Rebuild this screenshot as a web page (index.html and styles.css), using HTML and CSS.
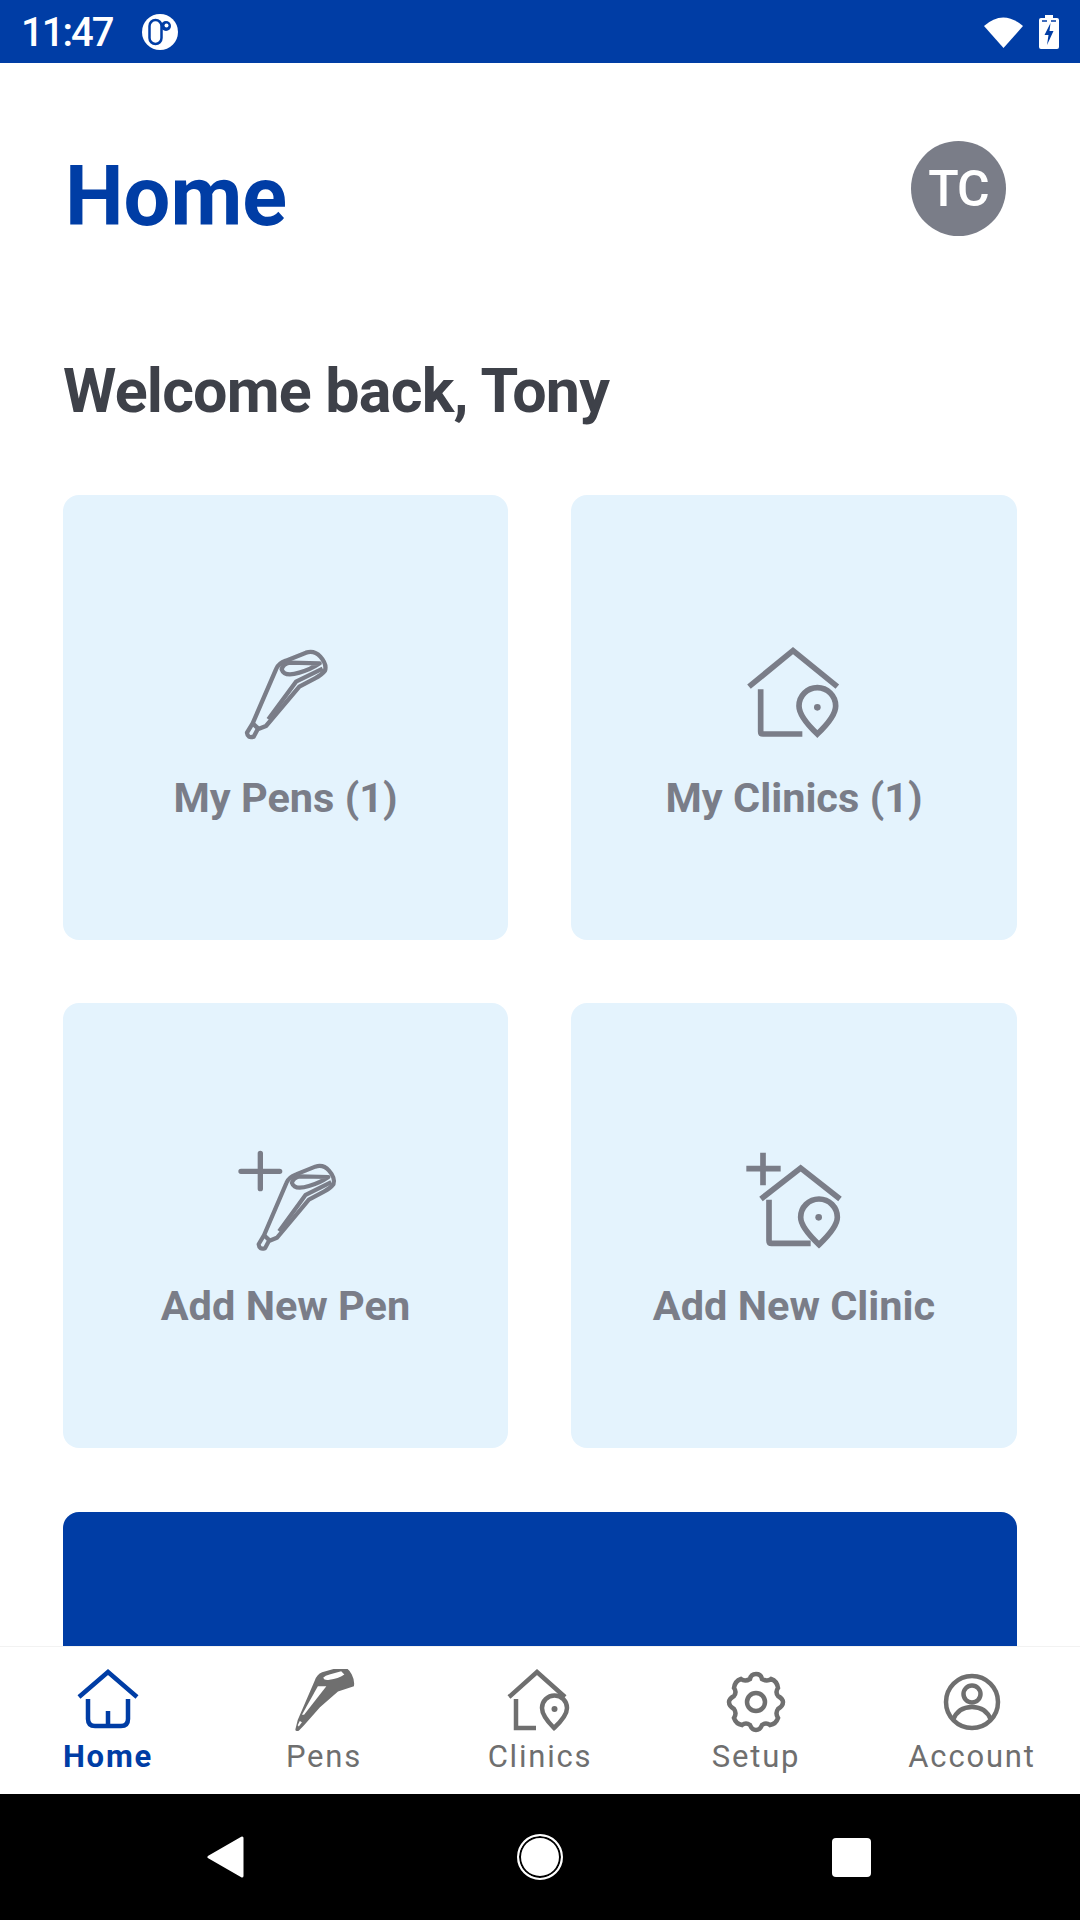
FILE: index.html
```html
<!DOCTYPE html>
<html lang="en">

<head>
  <meta charset="UTF-8">
  <meta name="viewport" content="width=device-width, initial-scale=1.0">
  <title>Home</title>

  <link rel="stylesheet" href="styles.css">
</head>

<body>
  <svg class="defs" width="0" height="0">
    <defs>
      <g id="pen">
        <path d="M78 308 L95 280 L165 118 Q172 100 195 92 L255 68 Q280 60 298 80 Q318 102 312 122 Q302 135 282 145 L235 170 L135 288 L110 298 L98 320 Q80 326 78 308 Z" />
        <path d="M182 118 Q186 102 205 98 L296 100 Q270 118 235 128 Q190 142 182 118 Z" />
        <path d="M305 116 L225 155 L142 268" />
        <path d="M95 280 L112 296" />
      </g>
    </defs>
  </svg>

  <div class="app">
    <div class="status-bar">
      <span class="time">11:47</span>
      <svg class="status-logo" viewBox="0 0 36 36">
        <circle cx="18" cy="18" r="18" fill="#fff" />
        <rect x="7.500" y="6" width="12" height="24" rx="6" fill="none" stroke="#003da5" stroke-width="2.500" />
        <circle cx="24" cy="12" r="5" fill="#003da5" />
        <circle cx="24.500" cy="11.500" r="2" fill="#fff" />
      </svg>
      <span class="spacer"></span>
      <svg class="status-wifi" viewBox="0 0 40 32">
        <path d="M0 10 Q19 -7 39 10 L19.500 32 Z" fill="#fff" />
      </svg>
      <svg class="status-battery" viewBox="0 0 20 34">
        <path d="M6 0 H14 V3 H18 Q20 3 20 5 V32 Q20 34 18 34 H2 Q0 34 0 32 V5 Q0 3 2 3 H6 Z" fill="#fff" />
        <path d="M3 6 H8 M12 6 H17" stroke="#003da5" stroke-width="1.500" />
        <path d="M11.500 8 L5.500 20 H9.500 L8 30 L14.500 16 H10.500 Z" fill="#003da5" />
      </svg>
    </div>

    <main class="content">
      <header class="page-head">
        <h1>Home</h1>
        <div class="avatar">TC</div>
      </header>
      <h2>Welcome back, Tony</h2>

      <div class="cards">
        <div class="card">
          <svg class="card-icon" viewBox="0 0 390 360">
            <use href="#pen" class="line-pen" />
          </svg>
          <div class="card-label">My Pens (1)</div>
        </div>
        <div class="card">
          <svg class="card-icon" viewBox="0 0 390 360">
            <g class="line-clinic">
              <path d="M60 170 L192 62 L325 170" />
              <path d="M95 178 V305 Q95 312 102 312 H220" />
              <path d="M265 312 Q210 260 210 228 A55 55 0 0 1 320 228 Q320 260 265 312 Z" />
            </g>
            <circle class="icon-dot" cx="265" cy="232" r="10" />
          </svg>
          <div class="card-label">My Clinics (1)</div>
        </div>
        <div class="card">
          <svg class="card-icon" viewBox="0 0 390 360">
            <path class="plus-round" d="M60 100 H176 M118 46 V152" />
            <use href="#pen" class="line-pen" transform="translate(38 20) scale(0.96 0.97)" />
          </svg>
          <div class="card-label">Add New Pen</div>
        </div>
        <div class="card">
          <svg class="card-icon" viewBox="0 0 390 360">
            <path class="plus-square" d="M52 92 H155 M102 44 V142" />
            <g class="line-clinic">
              <path d="M96 183 L215 90 L333 183" />
              <path d="M120 185 V308 Q120 316 128 316 H245" />
              <path d="M270 320 Q215 268 215 238 A55 55 0 0 1 325 238 Q325 268 270 320 Z" />
            </g>
            <circle class="icon-dot" cx="269" cy="238" r="10" />
          </svg>
          <div class="card-label">Add New Clinic</div>
        </div>
      </div>

      <div class="banner"></div>
    </main>

    <nav class="tabs">
      <div class="tab active">
        <svg class="tab-icon" viewBox="0 0 72 64">
          <path class="tab-line" d="M7 28 L36 3 L65 28" />
          <path class="tab-line" d="M16 30 V50 Q16 57 23 57 H49 Q56 57 56 50 V30 M36 42 V57" />
        </svg>
        <span>Home</span>
      </div>
      <div class="tab">
        <svg class="tab-icon" viewBox="0 0 72 64">
          <g transform="translate(-3 -3) scale(1.06)">
            <path class="pen-body" d="M10 59 L12 51 L28 14 Q30 8 35 6 L52 1 Q59 0 63 8 Q66 14 65 19 L50 24 L33 39 L18 56 L13 61 Q9 62 10 59 Z" />
            <path class="pen-white" d="M36 11 Q38 9 42 8 L53 5 L56 8 Q50 12 42 13 Q37 14 36 11 Z" />
            <path class="pen-white" d="M31 19 L39 19 L18 46 L16 46 Z" />
            <path class="pen-white" d="M14 52 L16 53 L13 57 L12 56 Z" />
          </g>
        </svg>
        <span>Pens</span>
      </div>
      <div class="tab">
        <svg class="tab-icon" viewBox="0 0 72 64">
          <path class="tab-line" d="M5 28 L33 3 L61 28" />
          <path class="tab-line" d="M12 30 V59 H32" />
          <path class="tab-line" d="M50 59 Q38 47 38 39 A12.500 12.500 0 0 1 63 39 Q63 47 50 59 Z" />
          <circle class="tab-dot" cx="50.500" cy="40" r="3" />
        </svg>
        <span>Clinics</span>
      </div>
      <div class="tab">
        <svg class="tab-icon" viewBox="0 0 72 64">
          <path class="tab-line" d="M36 5 Q41 5 42 10 Q47 13 51 10 Q57 12 58 19 Q55 23 58 27 Q63 30 63 33 Q63 37 58 40 Q55 44 58 49 Q56 55 50 56 Q46 53 42 56 Q40 61 36 61 Q32 61 30 56 Q26 53 22 56 Q16 55 14 49 Q17 44 14 40 Q9 37 9 33 Q9 30 14 27 Q17 23 14 19 Q15 12 21 10 Q25 13 30 10 Q31 5 36 5 Z" />
          <circle class="tab-line" cx="36" cy="33" r="9" />
        </svg>
        <span>Setup</span>
      </div>
      <div class="tab">
        <svg class="tab-icon" viewBox="0 0 72 64">
          <circle class="tab-line" cx="36" cy="33" r="26" />
          <circle class="tab-line" cx="36" cy="25" r="8.500" />
          <path class="tab-line" d="M17 51 Q22 38 36 38 Q50 38 55 51" />
        </svg>
        <span>Account</span>
      </div>
    </nav>

    <div class="system-bar">
      <svg class="sys-back" viewBox="0 0 38 42">
        <path d="M36 2 V40 L3 21 Z" fill="#fff" stroke="#fff" stroke-width="3" stroke-linejoin="round" />
      </svg>
      <div class="sys-home"></div>
      <div class="sys-recent"></div>
    </div>
  </div>
</body>

</html>
```

FILE: styles.css
```css
body {
  margin: 0;
  font-family: Roboto, "Liberation Sans", sans-serif;
  background-color: #fff;
}

.defs {
  position: absolute;
}

.app {
  display: flex;
  flex-direction: column;
  width: 1080px;
  height: 1920px;
  overflow: hidden;
}

.status-bar {
  display: flex;
  align-items: center;
  flex: none;
  height: 63px;
  padding: 0 21px 0 21px;
  background-color: #003da5;
  color: #fff;
}

.time {
  padding-top: 2px;
  font-size: 40px;
  font-weight: 500;
  letter-spacing: -2px;
}

.status-logo {
  width: 36px;
  height: 36px;
  margin-left: 30px;
}

.spacer {
  flex: 1;
}

.status-wifi {
  width: 40px;
  height: 32px;
  margin-right: 15px;
}

.status-battery {
  width: 20px;
  height: 34px;
}

.content {
  flex: 1;
  min-height: 0;
  overflow: hidden;
  padding: 0 63px;
}

.page-head {
  display: flex;
  justify-content: space-between;
  align-items: flex-start;
  padding: 78px 11px 0 2px;
}

h1 {
  margin: 6px 0 0;
  font-size: 83px;
  line-height: 100px;
  font-weight: 700;
  color: #003da5;
}

.avatar {
  display: flex;
  justify-content: center;
  align-items: center;
  width: 95px;
  height: 95px;
  border-radius: 50%;
  background-color: #7a7d88;
  color: #fff;
  font-size: 50px;
  font-weight: 500;
  letter-spacing: -1px;
}

h2 {
  margin: 109px 0 0;
  font-size: 61px;
  line-height: 70px;
  font-weight: 700;
  letter-spacing: -0.8px;
  color: #3e4149;
}

.cards {
  display: grid;
  grid-template-columns: 445px 446px;
  gap: 63px;
  margin-top: 69px;
}

.card {
  display: flex;
  flex-direction: column;
  align-items: center;
  height: 445px;
  padding-top: 135px;
  box-sizing: border-box;
  border-radius: 16px;
  background-color: #e4f3fd;
}

.card-icon {
  width: 130px;
  height: 120px;
}

.card-label {
  margin-top: 23px;
  font-size: 41.500px;
  line-height: 50px;
  font-weight: 700;
  color: #7a7d88;
}

.line-pen {
  fill: none;
  stroke: #7a7d88;
  stroke-width: 13;
  stroke-linejoin: round;
}

.line-clinic {
  fill: none;
  stroke: #7a7d88;
  stroke-width: 17;
}

.icon-dot {
  fill: #7a7d88;
}

.plus-round {
  fill: none;
  stroke: #7a7d88;
  stroke-width: 16;
  stroke-linecap: round;
}

.plus-square {
  fill: none;
  stroke: #7a7d88;
  stroke-width: 17;
}

.banner {
  height: 200px;
  margin-top: 64px;
  border-radius: 16px;
  background-color: #003da5;
}

.tabs {
  display: flex;
  flex: none;
  height: 148px;
  box-sizing: border-box;
  border-top: 1px solid #f2f2f2;
  background-color: #fff;
}

.tab {
  display: flex;
  flex: 1;
  flex-direction: column;
  align-items: center;
  padding-top: 22px;
  font-size: 31px;
  line-height: 36px;
  letter-spacing: 1.8px;
  color: #6f6f6f;
}

.tab-icon {
  width: 72px;
  height: 64px;
}

.tab span {
  margin-top: 6px;
}

.tab.active {
  color: #003da5;
  font-weight: 700;
}

.tab-line {
  fill: none;
  stroke: currentColor;
  stroke-width: 4.500;
}

.tab-dot,
.pen-body {
  fill: currentColor;
}

.pen-white {
  fill: #fff;
}

.system-bar {
  position: relative;
  flex: none;
  height: 126px;
  background-color: #000;
}

.sys-back {
  position: absolute;
  left: 206px;
  top: 42px;
  width: 38px;
  height: 42px;
}

.sys-home {
  position: absolute;
  left: 517px;
  top: 40px;
  width: 46px;
  height: 46px;
  box-sizing: border-box;
  border: 2px solid #fff;
  border-radius: 50%;
  background-color: #fff;
  box-shadow: inset 0 0 0 2px #000;
}

.sys-recent {
  position: absolute;
  left: 832px;
  top: 44px;
  width: 39px;
  height: 39px;
  border-radius: 4px;
  background-color: #fff;
}
```
